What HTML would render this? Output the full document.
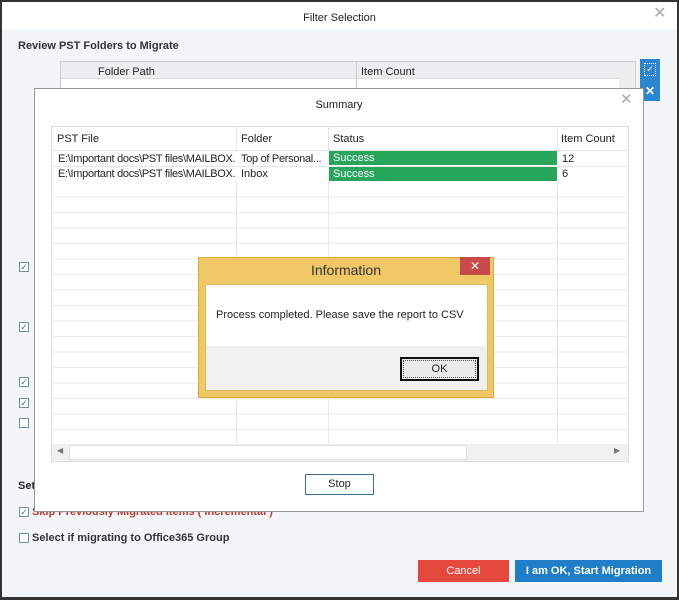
<!DOCTYPE html>
<html><head><style>
*{box-sizing:border-box;margin:0;padding:0}
body{width:679px;height:600px;position:relative;overflow:hidden;font-family:"Liberation Sans",sans-serif;font-size:11px;color:#222;background:#f3f6f8}
.a{position:absolute}
.cb{position:absolute;width:10px;height:10px;border:1px solid #6a8fb0;background:#fff;font-size:9px;line-height:8px;text-align:center;color:#3a6f9a}
.clip{white-space:nowrap;overflow:hidden;letter-spacing:-0.3px}
</style></head><body>
<div class="a" style="left:0;top:0;width:679px;height:600px;border:2px solid #333;border-bottom-width:3px"></div>
<div class="a" style="left:2px;top:2px;width:675px;height:27px;background:#fff"></div>
<div class="a" style="left:0;top:12px;width:679px;text-align:center;font-size:11px">Filter Selection</div>
<div class="a" style="left:653px;top:3px;font-size:16px;color:#aaa">✕</div>
<div class="a" style="left:18px;top:40px;font-weight:bold;font-size:11px;color:#333">Review PST Folders to Migrate</div>
<div class="a" style="left:60px;top:61px;width:576px;height:30px;background:#fff;border:1px solid #ccc"></div>
<div class="a" style="left:61px;top:62px;width:558px;height:17px;background:#eceeef;border-bottom:1px solid #ddd"></div>
<div class="a" style="left:356px;top:62px;width:1px;height:28px;background:#ccc"></div>
<div class="a" style="left:98px;top:66px">Folder Path</div>
<div class="a" style="left:361px;top:66px">Item Count</div>
<div class="a" style="left:619px;top:62px;width:16px;height:28px;background:#eee"></div>
<div class="a" style="left:640px;top:59px;width:20px;height:42px;background:#2a86d0"></div>
<div class="a" style="left:644px;top:63px;width:12px;height:13px;border:1px dotted #fff;color:#fff;font-size:9px;text-align:center;line-height:11px">✓</div>
<div class="a" style="left:645px;top:84px;color:#fff;font-weight:bold;font-size:12px">✕</div>
<div class="cb" style="left:19px;top:262px">✓</div>
<div class="cb" style="left:19px;top:322px">✓</div>
<div class="cb" style="left:19px;top:377px">✓</div>
<div class="cb" style="left:19px;top:398px">✓</div>
<div class="cb" style="left:19px;top:418px"></div>
<div class="a" style="left:18px;top:480px;font-weight:bold">Set</div>
<div class="cb" style="left:19px;top:507px">✓</div>
<div class="a" style="left:32px;top:506px;color:#c0392b;font-weight:bold">Skip Previously Migrated Items ( Incremental )</div>
<div class="cb" style="left:19px;top:533px"></div>
<div class="a" style="left:32px;top:532px;font-weight:bold;color:#333">Select if migrating to Office365 Group</div>
<div class="a" style="left:418px;top:560px;width:91px;height:22px;background:#e5483c;color:#fff;text-align:center;line-height:22px;font-size:11px">Cancel</div>
<div class="a" style="left:515px;top:560px;width:147px;height:22px;background:#1e7fc8;color:#fff;text-align:center;line-height:22px;font-size:11px;font-weight:bold">I am OK, Start Migration</div>

<!-- Summary -->
<div class="a" style="left:34px;top:88px;width:610px;height:424px;background:#fff;border:1px solid #999"></div>
<div class="a" style="left:34px;top:99px;width:610px;text-align:center">Summary</div>
<div class="a" style="left:620px;top:90px;font-size:15px;color:#aaa">✕</div>
<div class="a" style="left:51px;top:126px;width:578px;height:336px;border:1px solid #ddd;background:#fff;
background-image:repeating-linear-gradient(#fff 0 14.5px,#eaeaea 14.5px 15.5px);background-position:0 55px"></div>
<div class="a" style="left:52px;top:127px;width:576px;height:24px;background:#fff;border-bottom:1px solid #e3e3e3"></div>
<div class="a" style="left:236px;top:127px;width:1px;height:318px;background:#e6e6e6"></div>
<div class="a" style="left:328px;top:127px;width:1px;height:318px;background:#e6e6e6"></div>
<div class="a" style="left:557px;top:127px;width:1px;height:318px;background:#e6e6e6"></div>
<div class="a" style="left:57px;top:133px">PST File</div>
<div class="a" style="left:241px;top:133px">Folder</div>
<div class="a" style="left:333px;top:133px">Status</div>
<div class="a" style="left:561px;top:133px">Item Count</div>
<div class="a" style="left:52px;top:151px;width:576px;height:30px;background:#fff"></div>
<div class="a clip" style="left:58px;top:153px;width:177px">E:\Important docs\PST files\MAILBOX...</div>
<div class="a clip" style="left:241px;top:153px;width:86px">Top of Personal...</div>
<div class="a" style="left:329px;top:151px;width:228px;height:14px;background:#27a55a;color:#fff;padding:1px 4px">Success</div>
<div class="a" style="left:562px;top:153px">12</div>
<div class="a" style="left:52px;top:166px;width:576px;height:1px;background:#e6e6e6"></div>
<div class="a clip" style="left:58px;top:168px;width:177px">E:\Important docs\PST files\MAILBOX...</div>
<div class="a" style="left:241px;top:168px">Inbox</div>
<div class="a" style="left:329px;top:167px;width:228px;height:14px;background:#27a55a;color:#fff;padding:1px 4px">Success</div>
<div class="a" style="left:562px;top:168px">6</div>
<div class="a" style="left:52px;top:444px;width:576px;height:17px;background:#f0f0f0"></div>
<div class="a" style="left:69px;top:445px;width:398px;height:15px;background:#fff;border:1px solid #ddd"></div>
<div class="a" style="left:57px;top:446px;font-size:8px;color:#777">◀</div>
<div class="a" style="left:614px;top:446px;font-size:8px;color:#777">▶</div>
<div class="a" style="left:305px;top:474px;width:69px;height:21px;border:1px solid #3a6d96;background:#fff;text-align:center;line-height:19px">Stop</div>

<!-- Information -->
<div class="a" style="left:198px;top:257px;width:296px;height:141px;background:#f0c866;border:1px solid #d8ab3e"></div>
<div class="a" style="left:198px;top:262px;width:296px;text-align:center;font-size:14px;color:#333">Information</div>
<div class="a" style="left:460px;top:257px;width:30px;height:18px;background:#c94a4a;color:#fff;text-align:center;line-height:18px;font-size:12px">✕</div>
<div class="a" style="left:205px;top:284px;width:283px;height:107px;background:#f0f0f0;border:1px solid #e0b95a"></div>
<div class="a" style="left:206px;top:285px;width:281px;height:61px;background:#fff"></div>
<div class="a" style="left:216px;top:309px;font-size:11px">Process completed. Please save the report to CSV</div>
<div class="a" style="left:400px;top:357px;width:79px;height:24px;border:2px solid #111;background:#eaeaea;text-align:center;line-height:20px;outline:1px dotted #555;outline-offset:-4px">OK</div>
</body></html>
